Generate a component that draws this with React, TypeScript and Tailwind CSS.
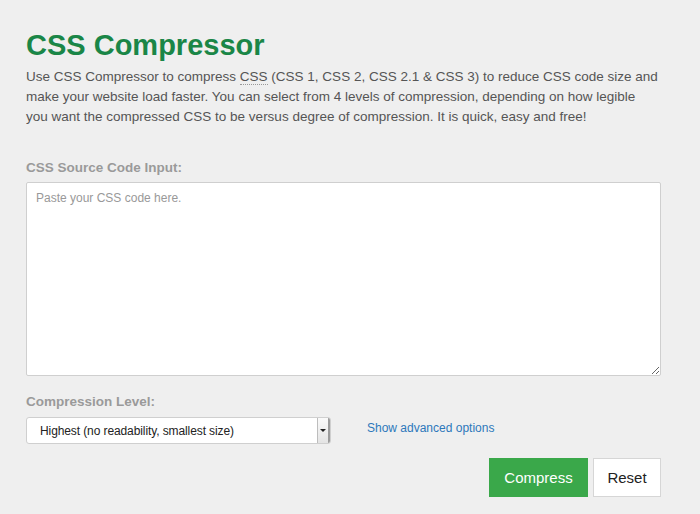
export default function App() {
  return (
    <div className="min-h-[514px] w-full bg-[#efefef] font-['Liberation_Sans',Arial,sans-serif]">
      <div className="w-[635px] ml-[26px] pt-[29px]">
        {/* Heading */}
        <h1 className="text-[29px] leading-[33px] font-bold text-[#1a8647]">CSS Compressor</h1>
        <p className="mt-[5px] w-[660px] text-[13.5px] leading-[20px] text-[#555]">
          Use CSS Compressor to compress{" "}
          <abbr title="Cascading Style Sheets" className="no-underline border-b border-dotted border-[#999]">
            CSS
          </abbr>{" "}
          (CSS 1, CSS 2, CSS 2.1 &amp; CSS 3) to reduce CSS code size and
          <br />
          make your website load faster. You can select from 4 levels of compression, depending on how legible
          <br />
          you want the compressed CSS to be versus degree of compression. It is quick, easy and free!
        </p>

        {/* Source input */}
        <label className="block mt-[31px] text-[13.5px] leading-[20px] font-bold text-[#9a9a9a]">
          CSS Source Code Input:
        </label>
        <textarea
          placeholder="Paste your CSS code here."
          className="block mt-[4px] w-[635px] h-[194px] bg-white border border-[#cfcfcf] rounded-[2px] px-[9px] py-[6px] text-[12px] leading-[18px] text-[#333] placeholder:text-[#999] outline-none"
        />

        {/* Compression level */}
        <label className="block mt-[16px] text-[13.5px] leading-[20px] font-bold text-[#9a9a9a]">
          Compression Level:
        </label>
        <div className="mt-[5px] flex items-center">
          <div className="flex w-[305px] h-[27px] bg-white border border-[#cfcfcf] rounded-[3px] overflow-hidden">
            <div className="flex-1 flex items-center pl-[13px] text-[12px] tracking-[-0.1px] text-[#222]">
              Highest (no readability, smallest size)
            </div>
            <div className="w-[13px] flex items-center justify-center border-l border-[#bdbdbd] bg-gradient-to-b from-[#fafafa] to-[#e4e4e4] border-r-2 border-r-[#9c9c9c]">
              <span className="block w-0 h-0 border-l-[3px] border-r-[3px] border-t-[3px] border-l-transparent border-r-transparent border-t-[#222]" />
            </div>
          </div>
          <a href="#" className="ml-[36px] mb-[5px] text-[12px] text-[#2d78bb]">
            Show advanced options
          </a>
        </div>

        {/* Actions */}
        <div className="mt-[14px] flex justify-end gap-[5px]">
          <button className="w-[99px] h-[39px] bg-[#3aa84a] text-white text-[15px] pt-[2px]">Compress</button>
          <button className="w-[68px] h-[39px] bg-white border border-[#d6d6d6] text-[#222] text-[15px] pt-[2px]">Reset</button>
        </div>
      </div>
    </div>
  );
}
